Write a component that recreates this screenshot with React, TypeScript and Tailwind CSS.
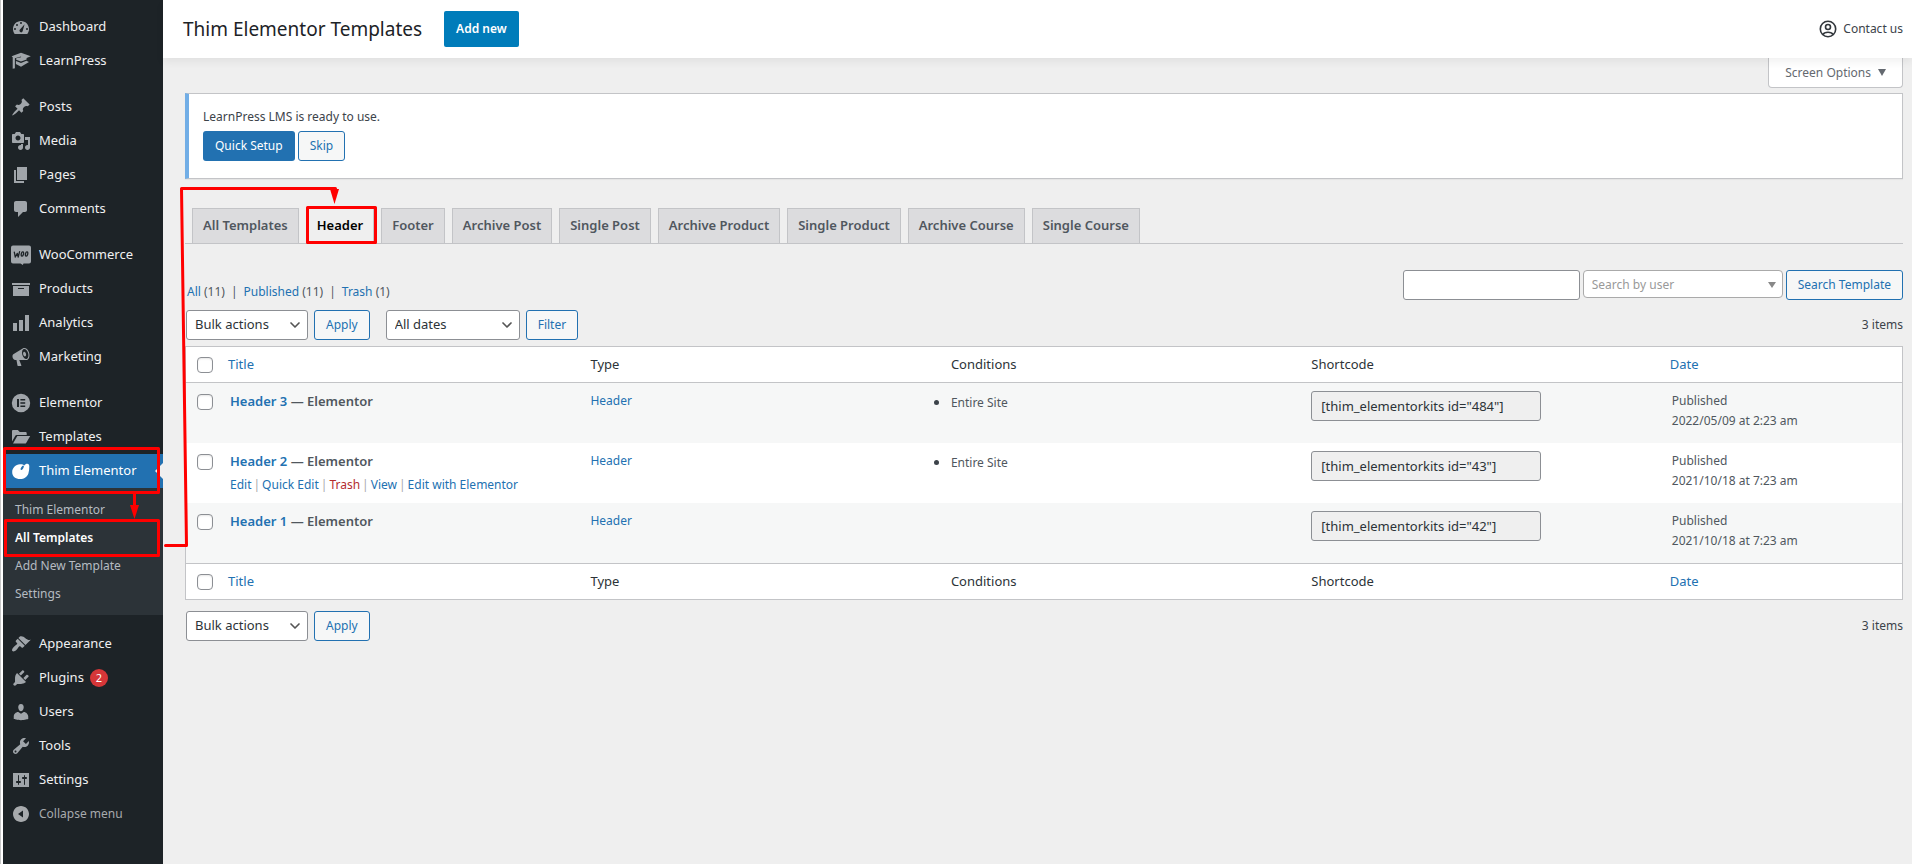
import type { ReactNode } from 'react';
import { ChevronDown } from 'lucide-react';

const dash = (d: string, extra?: ReactNode) => (
  <svg viewBox="0 0 20 20" className="size-5" fill="currentColor" fillRule="evenodd" aria-hidden="true">
    <path d={d} />
    {extra}
  </svg>
);

const icons: Record<string, ReactNode> = {
  dashboard: dash(
    'M3.76 17h12.48c1.1-1.37 1.76-3.11 1.76-5 0-4.42-3.58-8-8-8s-8 3.58-8 8c0 1.89.66 3.63 1.76 5zM9 6a1 1 0 1 0 2 0a1 1 0 1 0-2 0zM5 8a1 1 0 1 0 2 0a1 1 0 1 0-2 0zM3 12a1 1 0 1 0 2 0a1 1 0 1 0-2 0zM15 12a1 1 0 1 0 2 0a1 1 0 1 0-2 0zM13.6 7.2l-1.9 6.9c-.3 1-1.2 1.5-2.1 1.2s-1.4-1.3-1-2.2c.1-.2.2-.4.4-.5z',
  ),
  learnpress: dash(
    'M10 1.800L19.800 5.200l-4.200 1.700v1.500L10 10.400 5.200 8.700V7.300L10 6.200l.1-.7-6.200 1.700v9.600c0 .6-.5.9-2.200.9V6.300L.6 5.200zM4.900 9.900L10 11.900l5.400-2.100 2.600 1.300-8 4.700-5.100-2.900z',
  ),
  posts: dash(
    'M10.44 3.02l1.82-1.82 6.36 6.35-1.83 1.82c-1.05-.68-2.48-.57-3.41.36l-.75.75c-.92.93-1.04 2.35-.35 3.41l-1.83 1.82-2.41-2.41-2.8 2.79c-.42.42-3.38 2.71-3.8 2.29s1.86-3.39 2.28-3.81l2.79-2.79L4.1 9.36l1.83-1.82c1.05.69 2.48.57 3.4-.36l.75-.75c.93-.92 1.05-2.35.36-3.41z',
  ),
  media: dash(
    'M13 11V4c0-.55-.45-1-1-1h-1.67L9 1H5L3.67 3H2c-.55 0-1 .45-1 1v7c0 .55.45 1 1 1h10c.55 0 1-.45 1-1zM7 4.5c1.38 0 2.5 1.12 2.5 2.5S8.38 9.5 7 9.5 4.5 8.38 4.5 7 5.62 4.5 7 4.5zM14 6h5v10.5c0 1.38-1.12 2.5-2.5 2.5S14 17.88 14 16.5s1.12-2.5 2.5-2.5c.17 0 .34.02.5.05V9h-3V6zm-4 8.05V13h2v3.5c0 1.38-1.12 2.5-2.5 2.5S7 17.88 7 16.5 8.12 14 9.5 14c.17 0 .34.02.5.05z',
  ),
  pages: dash('M6 15V2h10v13H6zm-1 1h8v2H3V5h2v11z'),
  comments: dash('M5 2h9c1.1 0 2 .9 2 2v7c0 1.1-.9 2-2 2h-2l-5 5v-5H5c-1.1 0-2-.9-2-2V4c0-1.1.9-2 2-2z'),
  woo: dash(
    'M2 .5h16a2 2 0 0 1 2 2v14a2 2 0 0 1-2 2h-5.500l-.7 1.500-2.300-1.500H2a2 2 0 0 1-2-2v-14a2 2 0 0 1 2-2z',
    <g fill="none" stroke="#1d2327" strokeWidth="1.3" strokeLinecap="round" strokeLinejoin="round">
      <path d="M3.3 7.2l1 4.8 2-3.6.9 3.6L8.6 6.7" />
      <ellipse cx="11.4" cy="9" rx="1.1" ry="2.1" transform="rotate(14 11.4 9)" />
      <ellipse cx="15.6" cy="9" rx="1.1" ry="2.1" transform="rotate(14 15.6 9)" />
    </g>,
  ),
  products: dash('M19 4v2H1V4h18zM2 7h16v10H2V7zm11 3V9H7v1h6z'),
  analytics: dash('M18 18V2h-4v16h4zm-6 0V7H8v11h4zm-6 0v-8H2v8h4z'),
  marketing: dash(
    'M18.15 5.94c.46 1.62.38 3.22-.02 4.48-.42 1.28-1.26 2.18-2.3 2.48-.16.06-.26.06-.4.06-.06.02-.12.02-.18.02-.06.02-.14.02-.22.02h-6.8l2.22 5.5c.02.14-.06.26-.14.34-.08.1-.24.16-.34.16H6.95c-.1 0-.26-.06-.34-.16-.08-.08-.16-.2-.14-.34l-1-5.5H4.25l-.02-.02c-.5.06-1.08-.18-1.54-.62s-.88-1.08-1.06-1.88c-.24-.8-.2-1.56-.02-2.2.18-.62.58-1.08 1.06-1.3l.02-.02 9-5.4c.1-.06.18-.1.24-.16.06-.04.14-.08.24-.12.16-.08.28-.12.5-.18 1.04-.3 2.24.1 3.22.98s1.84 2.24 2.26 3.86zm-2.58 5.98h-.02c.4-.1.74-.34 1.04-.7.58-.7.86-1.76.86-3.04 0-.64-.1-1.3-.28-1.98-.34-1.36-1.02-2.5-1.78-3.24s-1.68-1.1-2.46-.88c-.82.22-1.4.96-1.7 2-.32 1.04-.28 2.36.06 3.72.38 1.36 1 2.5 1.8 3.24.78.74 1.62 1.1 2.48.88zm-2.54-7.08c.22-.04.42-.02.62.04.38.16.76.48 1.02 1s.42 1.2.42 1.78c0 .3-.04.56-.12.8-.18.48-.44.84-.86.94-.34.1-.8-.06-1.14-.4s-.64-.86-.78-1.5c-.18-.62-.12-1.24.02-1.72s.48-.84.82-.94z',
  ),
  elementor: dash(
    'M10 .8a9.2 9.2 0 1 0 0 18.4a9.2 9.2 0 0 0 0-18.4zM6 6h2v8H6zM9.4 6h4.8v1.5H9.4zM9.4 9.2h4.8v1.5H9.4zM9.4 12.5h4.8V14H9.4z',
  ),
  templates: dash('M1 4.2C1 3.5 1.5 3 2.2 3h4.6l2 2h5.6c.8 0 1.3.5 1.3 1.2V8H6.2c-1 0-1.8.5-2.3 1.4L1 14.6zM6.3 9h12.9l-3.9 6.7c-.3.6-.9.9-1.5.9H2z'),
  thim: dash(
    'M9 3.300C4.500 3.600 1.200 7 1.200 11.200c0 4.100 3.200 6.800 8 6.800 4 0 7-2.100 8.200-5.600.7-2.300.9-4.700.9-6.900 0-1.700-.7-2.700-2-2.700-1.300 0-2.200.7-3 1.600-.8-.8-2.300-1.200-4.300-1.100z',
    <ellipse cx="11.200" cy="6.800" rx="1.100" ry="2.500" transform="rotate(34 11.200 6.800)" fill="#2271b1" />,
  ),
  appearance: dash(
    'M14.48 11.06L7.41 3.99l1.5-1.5c.5-.56 2.3-.47 3.51.32 1.21.8 1.43 1.28 2.91 2.1 1.18.64 2.45 1.26 4.45.85zm-.71.71L6.7 4.7 4.93 6.47c-.39.39-.39 1.02 0 1.41l1.06 1.06c.39.39.39 1.03 0 1.42-.6.6-1.43 1.11-2.21 1.69-.35.26-.7.53-1.01.84C1.43 14.23.4 16.08 1.4 17.07c.99 1 2.84-.03 4.18-1.36.31-.31.58-.66.85-1.02.57-.78 1.08-1.61 1.69-2.21.39-.39 1.02-.39 1.41 0l1.06 1.06c.39.39 1.02.39 1.41 0z',
  ),
  plugins: dash(
    'M13.11 4.36L9.87 7.6 8 5.73l3.24-3.24c.35-.34 1.05-.2 1.56.32.52.51.66 1.21.31 1.55zm-8 1.77l.91-1.12 9.01 9.01-1.19.84c-.71.71-2.63 1.16-3.82 1.16H6.14L4.9 17.26c-.59.59-1.54.59-2.12 0-.59-.58-.59-1.53 0-2.12l1.24-1.24v-3.88c0-1.13.4-3.19 1.09-3.89zm7.26 3.97l3.24-3.24c.34-.35 1.04-.21 1.55.31.52.51.66 1.21.31 1.55l-3.24 3.25z',
  ),
  users: dash(
    'M10 9.25c-2.27 0-2.73-3.44-2.73-3.44C7 4.02 7.82 2 9.97 2c2.16 0 2.98 2.02 2.71 3.81 0 0-.41 3.44-2.68 3.44zm0 2.57L12.72 10c2.39 0 4.52 2.33 4.52 4.53v2.49s-3.65 1.13-7.24 1.13c-3.65 0-7.24-1.13-7.24-1.13v-2.49c0-2.25 1.94-4.48 4.47-4.48z',
  ),
  tools: dash(
    'M16.68 9.77c-1.34 1.34-3.3 1.67-4.95.99l-5.41 6.52c-.99.99-2.59.99-3.58 0s-.99-2.59 0-3.57l6.52-5.42c-.68-1.65-.35-3.61.99-4.95 1.28-1.28 3.12-1.62 4.72-1.06l-2.89 2.89 2.82 2.82 2.86-2.87c.53 1.58.18 3.39-1.08 4.65zM3.81 16.21c.4.39 1.04.39 1.43 0 .4-.4.4-1.04 0-1.43-.39-.4-1.03-.4-1.43 0-.39.39-.39 1.03 0 1.43z',
  ),
  settings: dash(
    'M18 17V3H2v14h16zM8 11h1c.55 0 1 .45 1 1s-.45 1-1 1H8v1.5c0 .28-.22.5-.5.5s-.5-.22-.5-.5V13H6c-.55 0-1-.45-1-1s.45-1 1-1h1V5.500c0-.28.22-.5.5-.5s.5.22.5.5V11zm5-2h-1c-.55 0-1-.45-1-1s.45-1 1-1h1V5.500c0-.28.22-.5.5-.5s.5.22.5.5V7h1c.55 0 1 .45 1 1s-.45 1-1 1h-1v5.500c0 .28-.22.5-.5.5s-.5-.22-.5-.5V9z',
  ),
  collapse: dash('M10 2c4.420 0 8 3.580 8 8s-3.580 8-8 8-8-3.580-8-8 3.580-8 8-8zM12 13.500v-7L7 10z'),
};

type Item = { icon: string; label: string; badge?: string; active?: boolean };

const menu: Item[][] = [
  [
    { icon: 'dashboard', label: 'Dashboard' },
    { icon: 'learnpress', label: 'LearnPress' },
  ],
  [
    { icon: 'posts', label: 'Posts' },
    { icon: 'media', label: 'Media' },
    { icon: 'pages', label: 'Pages' },
    { icon: 'comments', label: 'Comments' },
  ],
  [
    { icon: 'woo', label: 'WooCommerce' },
    { icon: 'products', label: 'Products' },
    { icon: 'analytics', label: 'Analytics' },
    { icon: 'marketing', label: 'Marketing' },
  ],
  [
    { icon: 'elementor', label: 'Elementor' },
    { icon: 'templates', label: 'Templates' },
    { icon: 'thim', label: 'Thim Elementor', active: true },
  ],
  [
    { icon: 'appearance', label: 'Appearance' },
    { icon: 'plugins', label: 'Plugins', badge: '2' },
    { icon: 'users', label: 'Users' },
    { icon: 'tools', label: 'Tools' },
    { icon: 'settings', label: 'Settings' },
  ],
];

const submenu = ['Thim Elementor', 'All Templates', 'Add New Template', 'Settings'];

function MenuItem({ item }: { item: Item }) {
  return (
    <li>
      <a
        href="#"
        className={`relative flex h-[34px] items-center text-[13px] ${item.active ? 'bg-[#2271b1] text-white' : 'text-[#f0f0f1]'}`}
      >
        <span className={`flex w-9 justify-center ${item.active ? 'text-white' : 'text-[#a0a5aa]'}`}>{icons[item.icon]}</span>
        {item.label}
        {item.badge && (
          <span className="ml-[6px] flex size-[18px] items-center justify-center rounded-full bg-[#d63638] text-[11px] text-white">
            {item.badge}
          </span>
        )}
        {item.active && (
          <svg viewBox="0 0 8 16" className="absolute top-[9px] right-0 h-4 w-2" aria-hidden="true">
            <path d="M8 0v16L0 8z" fill="#efefef" />
          </svg>
        )}
      </a>
      {item.active && (
        <ul className="bg-[#2c3338] pt-2 pb-[7px]">
          {submenu.map((s) => (
            <li key={s}>
              <a
                href="#"
                className={`flex h-7 items-center pl-3 text-[12px] ${s === 'All Templates' ? 'font-semibold text-white' : 'text-[#b5bbc1]'}`}
              >
                {s}
              </a>
            </li>
          ))}
        </ul>
      )}
    </li>
  );
}

function Sidebar() {
  return (
    <nav aria-label="Main menu" className="w-40 shrink-0 bg-[#1d2327] pt-[10px]">
      <div className="flex flex-col gap-3">
        {menu.map((group, i) => (
          <ul key={i}>
            {group.map((item) => (
              <MenuItem key={item.label} item={item} />
            ))}
            {i === menu.length - 1 && (
              <li>
                <button type="button" className="flex h-[34px] items-center text-[12px] text-[#a7aaad]">
                  <span className="flex w-9 justify-center">{icons.collapse}</span>
                  Collapse menu
                </button>
              </li>
            )}
          </ul>
        ))}
      </div>
    </nav>
  );
}

const outline = 'h-[30px] rounded-[3px] border border-[#2271b1] bg-[#f6f7f7] px-[11px] text-[12px] text-[#2271b1]';

function Picker({ label, value, width }: { label: string; value: string; width: string }) {
  return (
    <div className={`relative ${width}`}>
      <select
        aria-label={label}
        className="h-[30px] w-full appearance-none rounded-[3px] border border-[#8c8f94] bg-white pr-6 pl-2 text-[13px] text-[#2c3338]"
      >
        <option>{value}</option>
      </select>
      <ChevronDown className="pointer-events-none absolute top-[7px] right-[5px] size-4 text-[#555]" strokeWidth={2.5} />
    </div>
  );
}

function BulkActions({ label }: { label: string }) {
  return (
    <>
      <Picker label={label} value="Bulk actions" width="w-[122px]" />
      <button type="button" className={outline}>
        Apply
      </button>
    </>
  );
}

const box = 'block size-4 appearance-none rounded-[4px] border border-[#8c8f94] bg-white shadow-[inset_0_1px_2px_rgba(0,0,0,0.1)]';

function HeadingCells({ which, edge }: { which: string; edge: string }) {
  const th = `text-left font-normal border-[#c3c4c7] ${edge}`;
  return (
    <tr className="h-9">
      <td className={`border-[#c3c4c7] pl-[11px] ${edge}`}>
        <input type="checkbox" aria-label={`Select all (${which})`} className={box} />
      </td>
      <th scope="col" className={`px-2 ${th}`}>
        <a href="#" className="text-[#2271b1]">
          Title
        </a>
      </th>
      <th scope="col" className={`px-[10px] ${th}`}>
        Type
      </th>
      <th scope="col" className={`px-[10px] ${th}`}>
        Conditions
      </th>
      <th scope="col" className={`px-[10px] ${th}`}>
        Shortcode
      </th>
      <th scope="col" className={`px-2 ${th}`}>
        <a href="#" className="text-[#2271b1]">
          Date
        </a>
      </th>
    </tr>
  );
}

const rows = [
  { name: 'Header 3', site: true, id: '484', date: '2022/05/09 at 2:23 am' },
  { name: 'Header 2', site: true, id: '43', date: '2021/10/18 at 7:23 am', actions: true },
  { name: 'Header 1', site: false, id: '42', date: '2021/10/18 at 7:23 am' },
];

const actions = ['Edit', 'Quick Edit', 'Trash', 'View', 'Edit with Elementor'];

function TemplateTable() {
  return (
    <table className="mt-[6px] w-full table-fixed border-separate border-spacing-0 border border-[#c3c4c7] bg-white text-[13px] text-[#2c3338]">
      <colgroup>
        <col className="w-[34px]" />
        <col />
        <col />
        <col />
        <col />
        <col className="w-[14%]" />
      </colgroup>
      <thead>
        <HeadingCells which="top" edge="border-b" />
      </thead>
      <tbody className="text-[12px] leading-5 text-[#50575e]">
        {rows.map((r, i) => (
          <tr key={r.id} className={`h-[60px] align-top ${i % 2 === 0 ? 'bg-[#f6f7f7]' : 'bg-white'}`}>
            <td className="pt-[11px] pl-[11px]">
              <input type="checkbox" aria-label={`Select ${r.name}`} className={box} />
            </td>
            <td className="px-[10px] pt-2">
              <strong className="block text-[13px] font-semibold">
                <a href="#" className="text-[#2271b1]">
                  {r.name}
                </a>{' '}
                — Elementor
              </strong>
              {r.actions && (
                <div className="mt-1 flex gap-[2px] text-[#a7aaad]">
                  {actions.map((a, n) => (
                    <span key={a} className="flex gap-[2px]">
                      <a href="#" className={a === 'Trash' ? 'text-[#b32d2e]' : 'text-[#2271b1]'}>
                        {a}
                      </a>
                      {n < actions.length - 1 && '|'}
                    </span>
                  ))}
                </div>
              )}
            </td>
            <td className="px-[10px] pt-2">
              <a href="#" className="text-[#2271b1]">
                Header
              </a>
            </td>
            <td className="px-[10px] pt-2">
              {r.site && (
                <ul className="list-disc marker:text-[15px] marker:text-[#3c434a]">
                  <li>Entire Site</li>
                </ul>
              )}
            </td>
            <td className="px-[10px] pt-2">
              <input
                readOnly
                aria-label={`Shortcode for ${r.name}`}
                value={`[thim_elementorkits id="${r.id}"]`}
                className="h-[30px] w-[230px] rounded-[3px] border border-[#8c8f94] bg-[#efefef] px-[9px] text-[13px] text-[#2c3338]"
              />
            </td>
            <td className="px-[10px] pt-2">
              Published
              <br />
              {r.date}
            </td>
          </tr>
        ))}
      </tbody>
      <tfoot>
        <HeadingCells which="bottom" edge="border-t" />
      </tfoot>
    </table>
  );
}

const tabs = [
  'All Templates',
  'Header',
  'Footer',
  'Archive Post',
  'Single Post',
  'Archive Product',
  'Single Product',
  'Archive Course',
  'Single Course',
];

function Callouts() {
  return (
    <svg
      viewBox="0 0 400 600"
      className="pointer-events-none absolute top-0 left-0 h-[600px] w-[400px]"
      fill="none"
      stroke="#f00"
      strokeWidth="3"
      strokeLinejoin="round"
      strokeLinecap="round"
      aria-hidden="true"
    >
      <rect x="4.5" y="448.5" width="154" height="44" />
      <rect x="5.5" y="520.5" width="153" height="35" />
      <path d="M134.500 494v12" />
      <path d="M130 505h9l-4.500 14z" fill="#f00" stroke="none" />
      <path d="M165.500 545.500h21l-5-357h154" />
      <path d="M330 189h9l-4.500 15z" fill="#f00" stroke="none" />
      <rect x="307.500" y="207.500" width="68" height="35" />
    </svg>
  );
}

export default function App() {
  return (
    <div className="relative flex min-h-screen bg-[#efefef] font-['Noto_Sans',sans-serif] text-[12px] text-[#3c434a]">
      <div className="w-[3px] shrink-0 border-l border-[#c6c6c6] bg-white" />
      <Sidebar />
      <div className="min-w-0 flex-1">
        <header className="relative flex h-[58px] items-center bg-white pr-[9px] pl-5 shadow-[0_4px_8px_rgba(0,0,0,0.06)]">
          <h1 className="text-[19px] text-[#1d2327]">Thim Elementor Templates</h1>
          <button type="button" className="ml-[22px] h-9 rounded-[2px] bg-[#007cba] px-3 text-[12px] font-semibold text-white">
            Add new
          </button>
          <a href="#" className="ml-auto flex items-center gap-[6px]">
            <svg viewBox="0 0 18 18" className="size-[18px]" fill="none" stroke="#32373c" strokeWidth="1.600" aria-hidden="true">
              <circle cx="9" cy="9" r="7.700" />
              <circle cx="9" cy="7" r="2.500" />
              <path d="M3.900 14.600c.8-1.700 2.600-2.400 5.100-2.400s4.300.7 5.100 2.400" />
            </svg>
            Contact us
          </a>
        </header>

        <main className="pr-[9px] pl-[22px]">
          <div className="flex justify-end">
            <button
              type="button"
              className="flex h-[30px] items-center gap-[7px] rounded-b-[4px] border border-t-0 border-[#c3c4c7] bg-white px-4 text-[#646970]"
            >
              Screen Options
              <svg viewBox="0 0 8 7" className="h-[7px] w-2" fill="currentColor" aria-hidden="true">
                <path d="M0 0h8L4 7z" />
              </svg>
            </button>
          </div>

          <section className="mt-[5px] h-[86px] border border-l-4 border-[#c3c4c7] border-l-[#72aee6] bg-white px-[14px] pt-[13px] shadow-[0_1px_1px_rgba(0,0,0,0.04)]">
            <p className="leading-5">LearnPress LMS is ready to use.</p>
            <div className="mt-1 flex gap-[3px]">
              <button type="button" className="h-[30px] rounded-[3px] bg-[#2271b1] px-3 text-[12px] text-white">
                Quick Setup
              </button>
              <button type="button" className={outline}>
                Skip
              </button>
            </div>
          </section>

          <nav aria-label="Template types" className="mt-[29px] flex gap-[7px] border-b border-[#c3c4c7] pl-[7px]">
            {tabs.map((t) => (
              <a
                key={t}
                href="#"
                className={`flex h-[35px] items-center border border-b-0 border-[#c3c4c7] px-[10px] text-[13px] font-semibold ${
                  t === 'Header' ? 'bg-[#efefef] text-black' : 'bg-[#dcdcde] text-[#50575e]'
                }`}
              >
                {t}
              </a>
            ))}
          </nav>

          <div className="mt-[26px] flex items-start justify-between">
            <ul className="mt-[13px] flex gap-[6px] pl-[2px] leading-[18px] text-[#50575e]">
              <li>
                <a href="#" className="text-[#2271b1]">
                  All
                </a>{' '}
                (11)
              </li>
              <li>|</li>
              <li>
                <a href="#" className="text-[#2271b1]">
                  Published
                </a>{' '}
                (11)
              </li>
              <li>|</li>
              <li>
                <a href="#" className="text-[#2271b1]">
                  Trash
                </a>{' '}
                (1)
              </li>
            </ul>
            <div className="flex items-start gap-[3px]">
              <input
                type="search"
                aria-label="Search templates"
                className="h-[30px] w-[177px] rounded-[3px] border border-[#8c8f94] bg-white px-2"
              />
              <div className="relative w-[200px]">
                <select
                  aria-label="Search by user"
                  className="h-7 w-full appearance-none rounded-[4px] border border-[#aaa] bg-white pt-[2px] pl-2 text-[12px] text-[#999]"
                >
                  <option>Search by user</option>
                </select>
                <svg viewBox="0 0 8 6" className="pointer-events-none absolute top-3 right-[7px] h-[6px] w-2" fill="#888" aria-hidden="true">
                  <path d="M0 0h8L4 6z" />
                </svg>
              </div>
              <button type="button" className={outline}>
                Search Template
              </button>
            </div>
          </div>

          <div className="mt-[9px] flex items-center gap-[6px] pl-px">
            <BulkActions label="Bulk actions (top)" />
            <div className="ml-[10px]">
              <Picker label="Filter by date" value="All dates" width="w-[134px]" />
            </div>
            <button type="button" className={outline}>
              Filter
            </button>
            <span className="ml-auto">3 items</span>
          </div>

          <TemplateTable />

          <div className="mt-[11px] flex items-center gap-[6px] pl-px">
            <BulkActions label="Bulk actions (bottom)" />
            <span className="ml-auto">3 items</span>
          </div>
        </main>
      </div>
      <Callouts />
    </div>
  );
}
